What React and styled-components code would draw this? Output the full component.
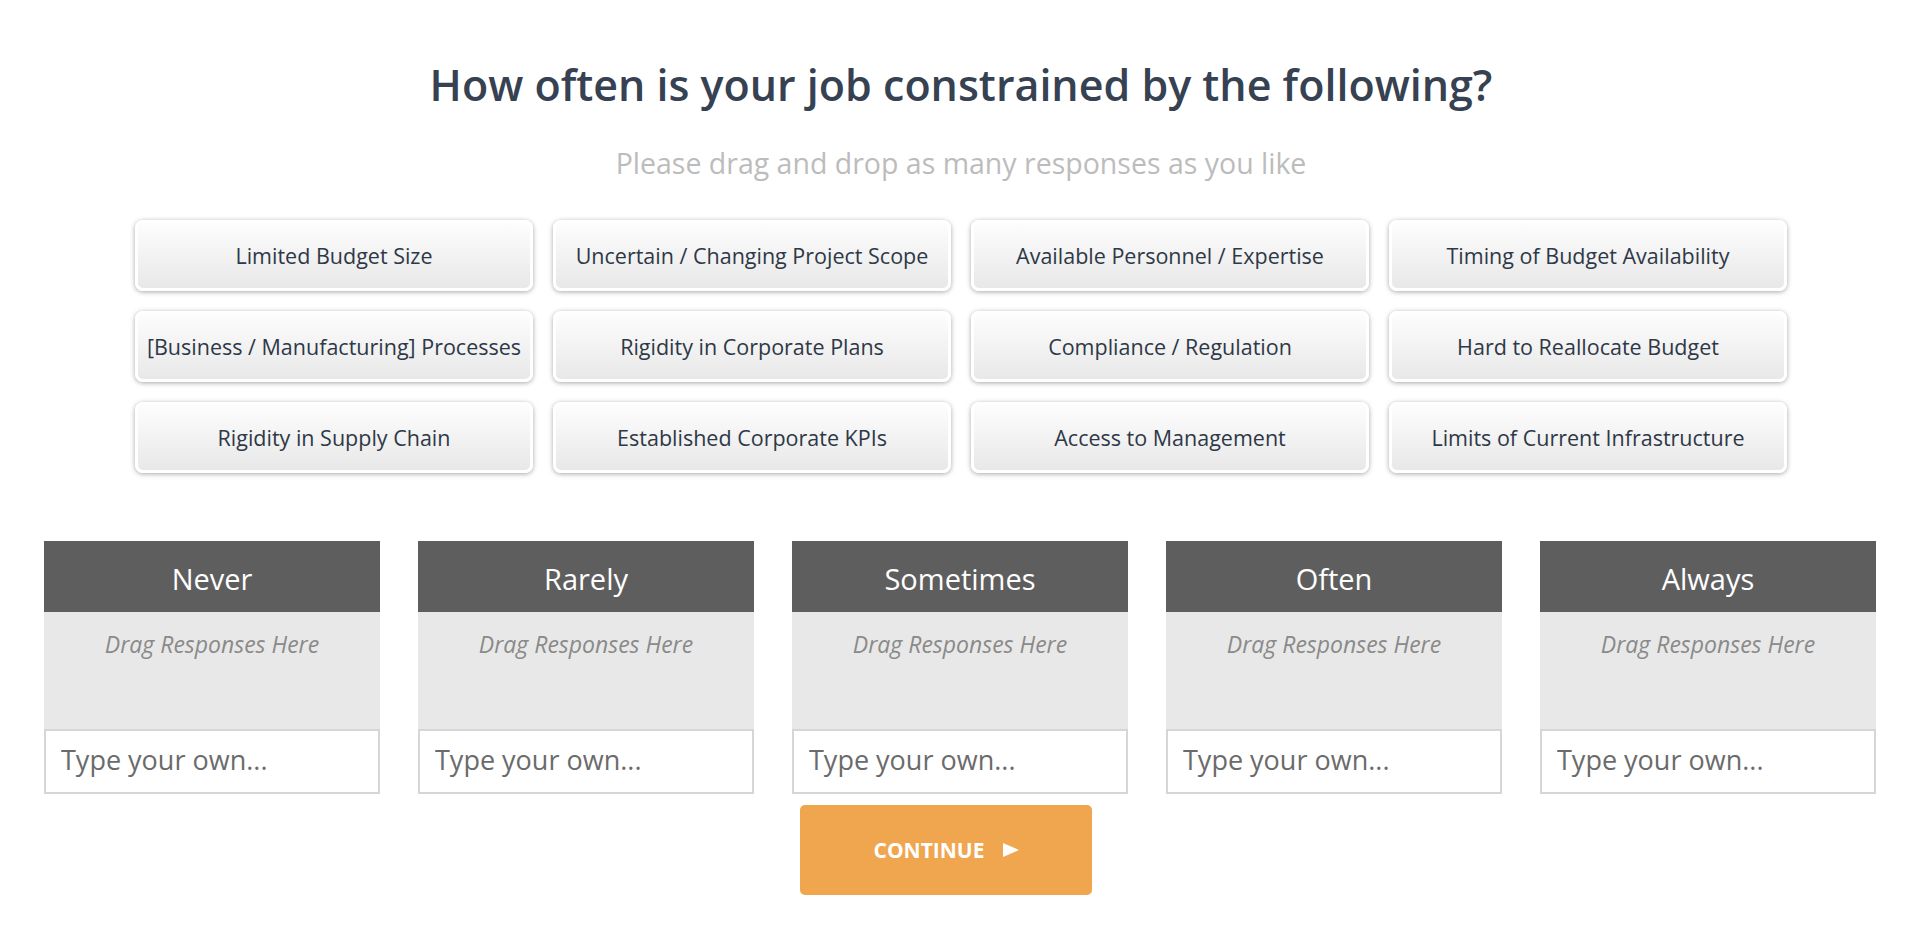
import React from "react";
import styled, { createGlobalStyle } from "styled-components";

const GlobalStyle = createGlobalStyle`
  body {
    margin: 0;
    background: #ffffff;
    font-family: "Open Sans", "Liberation Sans", sans-serif;
  }
`;

const Page = styled.div`
  display: flex;
  flex-direction: column;
  align-items: center;
  padding-top: 55px;
`;

const Title = styled.h1`
  margin: 0;
  font-size: 43px;
  font-weight: 600;
  color: #364152;
  line-height: normal;
`;

const Subtitle = styled.p`
  margin: 30px 0 0;
  font-size: 28.5px;
  color: #bcbcbc;
  line-height: normal;
`;

const TileGrid = styled.div`
  display: grid;
  grid-template-columns: repeat(4, 398px);
  grid-auto-rows: 71px;
  gap: 20px;
  margin-top: 38px;
`;

const Tile = styled.div`
  display: flex;
  align-items: center;
  justify-content: center;
  box-sizing: border-box;
  border: 3px solid #ffffff;
  border-radius: 8px;
  background: linear-gradient(#fdfdfd, #e8e8e8);
  box-shadow: 0 1px 5px rgba(0, 0, 0, 0.35);
  font-size: 21.5px;
  color: #2e3847;
  cursor: grab;
`;

const Buckets = styled.div`
  align-self: stretch;
  display: grid;
  grid-template-columns: repeat(5, 1fr);
  gap: 38px;
  padding: 0 46px 0 44px;
  margin-top: 68px;
`;

const Bucket = styled.div`
  display: flex;
  flex-direction: column;
`;

const BucketHeader = styled.div`
  box-sizing: border-box;
  height: 71px;
  padding-top: 18px;
  background: #5e5e5e;
  color: #ffffff;
  font-size: 29px;
  text-align: center;
  line-height: normal;
`;

const DropZone = styled.div`
  box-sizing: border-box;
  height: 117px;
  padding-top: 16px;
  background: #e8e8e8;
  color: #8a8a8a;
  font-size: 23px;
  font-style: italic;
  text-align: center;
  line-height: normal;
`;

const OwnInput = styled.input`
  box-sizing: border-box;
  width: 100%;
  height: 65px;
  margin: 0;
  padding: 0 15px 4px;
  border: 2px solid #d6d6d6;
  background: #ffffff;
  font-family: "Open Sans", "Liberation Sans", sans-serif;
  font-size: 27px;
  color: #555;
  outline: none;

  &::placeholder {
    color: #6b6b6b;
  }
`;

const ButtonRow = styled.div`
  display: flex;
  justify-content: center;
  padding-right: 30px;
  margin-top: 11px;
`;

const ContinueButton = styled.button`
  display: flex;
  align-items: center;
  justify-content: center;
  gap: 18px;
  width: 292px;
  height: 90px;
  border: none;
  border-radius: 5px;
  background: #efa64f;
  color: #ffffff;
  font-family: "Open Sans", "Liberation Sans", sans-serif;
  font-size: 21px;
  font-weight: 700;
  cursor: pointer;
`;

const responses = [
  "Limited Budget Size",
  "Uncertain / Changing Project Scope",
  "Available Personnel / Expertise",
  "Timing of Budget Availability",
  "[Business / Manufacturing] Processes",
  "Rigidity in Corporate Plans",
  "Compliance / Regulation",
  "Hard to Reallocate Budget",
  "Rigidity in Supply Chain",
  "Established Corporate KPIs",
  "Access to Management",
  "Limits of Current Infrastructure",
];

const frequencies = ["Never", "Rarely", "Sometimes", "Often", "Always"];

function App() {
  return (
    <>
      <GlobalStyle />
      <Page>
        <Title>How often is your job constrained by the following?</Title>
        <Subtitle>Please drag and drop as many responses as you like</Subtitle>
        <TileGrid>
          {responses.map((r) => (
            <Tile key={r}>{r}</Tile>
          ))}
        </TileGrid>
        <Buckets>
          {frequencies.map((f) => (
            <Bucket key={f}>
              <BucketHeader>{f}</BucketHeader>
              <DropZone>Drag Responses Here</DropZone>
              <OwnInput placeholder="Type your own..." />
            </Bucket>
          ))}
        </Buckets>
        <ButtonRow>
          <ContinueButton>
            CONTINUE
            <svg width="16" height="14" viewBox="0 0 16 14">
              <polygon points="0,0 16,7 0,14" fill="#ffffff" />
            </svg>
          </ContinueButton>
        </ButtonRow>
      </Page>
    </>
  );
}

export default App;
